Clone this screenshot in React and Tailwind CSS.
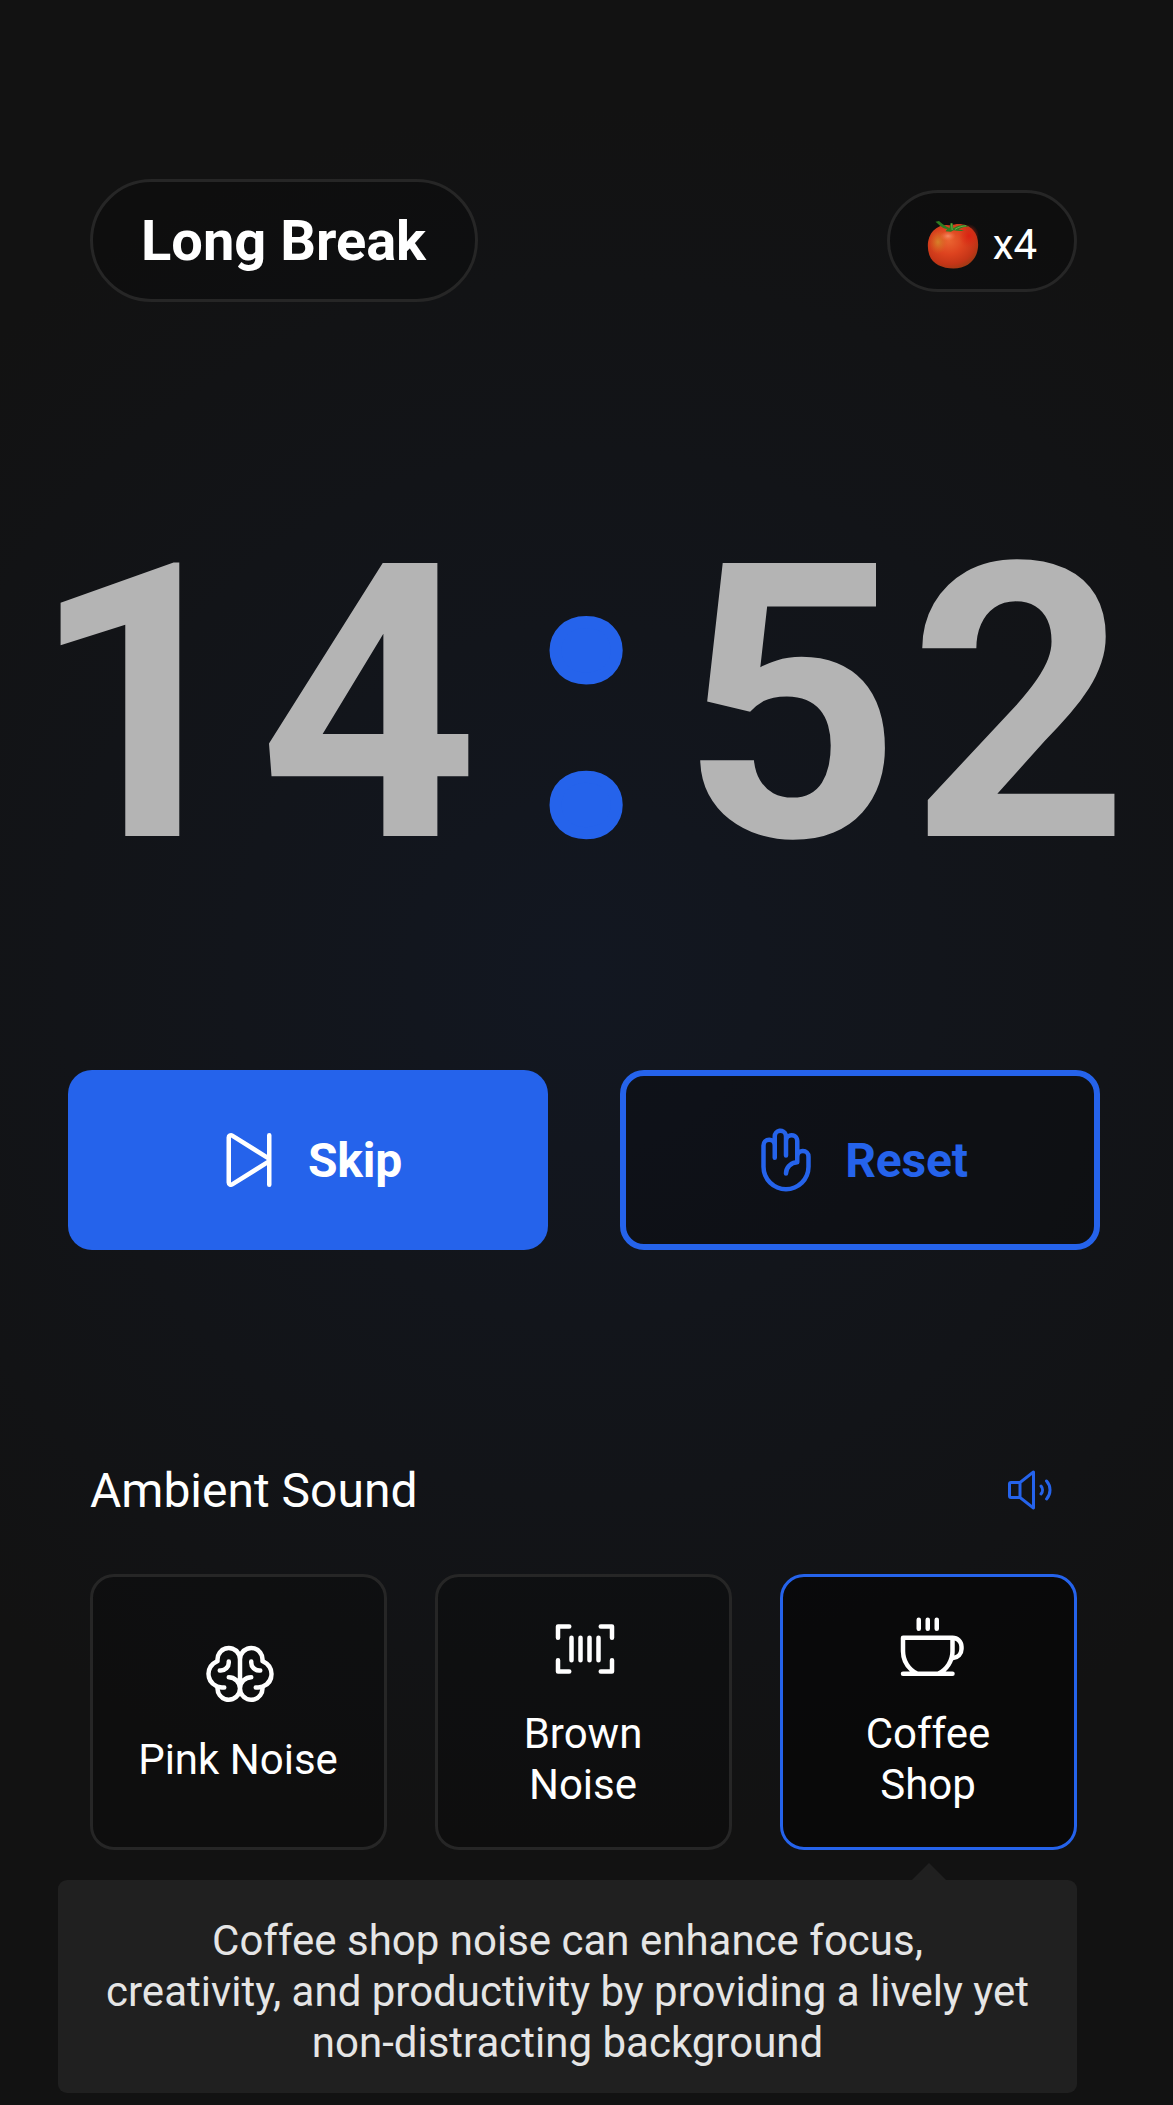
import {
  PiSkipForward,
  PiHandPalm,
  PiSpeakerHigh,
  PiBrain,
  PiBarcode,
  PiCoffee,
} from "react-icons/pi";

function Tomato() {
  return (
    <svg viewBox="0 0 54 54" className="mt-[6px] h-[54px] w-[54px]" aria-hidden="true">
      <defs>
        <radialGradient id="skin" cx="0.42" cy="0.38" r="0.66">
          <stop offset="0" stopColor="#ea6430" />
          <stop offset="0.45" stopColor="#dd431f" />
          <stop offset="0.8" stopColor="#c43517" />
          <stop offset="1" stopColor="#9c3a14" />
        </radialGradient>
        <radialGradient id="amber" cx="0.5" cy="0.5" r="0.5">
          <stop offset="0" stopColor="#d48a2a" stopOpacity="0.85" />
          <stop offset="1" stopColor="#d0701f" stopOpacity="0" />
        </radialGradient>
        <radialGradient id="shine" cx="0.5" cy="0.5" r="0.5">
          <stop offset="0" stopColor="#ffb08e" stopOpacity="0.6" />
          <stop offset="1" stopColor="#ff7b50" stopOpacity="0" />
        </radialGradient>
        <radialGradient id="red" cx="0.5" cy="0.5" r="0.5">
          <stop offset="0" stopColor="#dc1f12" stopOpacity="0.9" />
          <stop offset="1" stopColor="#dc2a14" stopOpacity="0" />
        </radialGradient>
      </defs>
      <path
        d="M24 4.500C31 1.500 41 3 46 9c5.500 5.500 6.500 16 3.500 24-3.500 9-12 14.500-23 14.500S5.500 43 2.300 34C-.7 25 1 15 6.500 9.500 12 4.500 18 3 24 4.500Z"
        fill="url(#skin)"
      />
      <ellipse cx="11" cy="21" rx="9" ry="12" fill="url(#amber)" />
      <ellipse cx="42" cy="15" rx="10" ry="12" fill="url(#red)" />
      <ellipse cx="21" cy="15" rx="8" ry="5" fill="url(#shine)" />
      <path
        d="M8.500.8 12 0C15 2.500 18 5.300 22.500 7L23.500 2l2.300.3.500 4.900c4-2.200 8.500-3.500 12.500-3l3.500 1.200c-4.500 0-8 1.100-10.700 3.100l5.500 1c-4 .9-7.500.5-10.300-.3l-3 1.600-5.200-.5 1.600-2.200C15.500 7.500 12.500 4.500 8.500.8Z"
        fill="#2f7d22"
      />
      <path d="M24.500 2.500l.7 6.500M39 4.800c-4 .2-8 1.500-11 3.600" stroke="#6db04a" strokeWidth="0.9" fill="none" />
    </svg>
  );
}

function SoundCard({ Icon, label, active }) {
  return (
    <button
      className={
        "flex h-[276px] flex-col items-center justify-center rounded-3xl border-[3px] px-9 text-center text-[42px] leading-[51px] text-white " +
        (active ? "border-[#2563eb] bg-black/50" : "border-[#262626] bg-black/20")
      }
    >
      <Icon className="ml-[3px] size-[72px] shrink-0" />
      <span className="mt-[23px] mr-px mb-px">{label}</span>
    </button>
  );
}

export default function App() {
  return (
    <main className="flex h-[2105px] w-[1173px] flex-col overflow-hidden bg-[#121212] bg-[radial-gradient(circle_870px_at_586px_975px,#121721_0%,#121212_100%)] font-['Roboto',sans-serif] text-white">
      <header className="mt-[179px] flex h-[123px] shrink-0 items-center justify-between pr-24 pl-[90px]">
        <h1 className="flex h-[123px] w-[388px] items-center justify-center rounded-full border-[3px] border-[#262626] bg-black/20 pr-px text-[56px] font-bold">
          Long Break
        </h1>
        <div className="flex h-[102px] w-[190px] items-center justify-center gap-3 rounded-full border-[3px] border-[#262626] bg-black/20 pt-2 text-[42px]">
          <Tomato />
          <span>x4</span>
        </div>
      </header>

      <section className="mt-[178px] flex h-[450px] shrink-0 items-center pl-[29px] text-[384px] leading-none font-bold text-[#b4b4b4]">
        <span className="-mr-[9px] tracking-[9px]">14</span>
        <span className="w-[202px] pb-[10px] pl-[14px] text-center text-[#2563eb] [-webkit-text-stroke:12px_#2563eb]">
          :
        </span>
        <span className="-mr-2 tracking-[8px]">52</span>
      </section>

      <div className="mt-[140px] grid h-[180px] shrink-0 grid-cols-2 gap-[72px] pr-[73px] pl-[68px] text-[48px] font-bold tracking-[-0.2px]">
        <button className="flex items-center justify-center gap-[23px] rounded-3xl bg-[#2563eb] pr-px">
          <PiSkipForward className="size-[72px]" />
          <span className="pt-0.5">Skip</span>
        </button>
        <button className="flex items-center justify-center gap-[23px] rounded-3xl border-[6px] border-[#2563eb] bg-black/20 pr-0.5 text-[#2563eb]">
          <PiHandPalm className="size-[72px]" />
          <span className="pt-0.5">Reset</span>
        </button>
      </div>

      <section className="mt-[192px] shrink-0 pr-24 pl-[90px]">
        <div className="flex h-24 items-center justify-between">
          <h2 className="pt-0.5 text-[48px]">Ambient Sound</h2>
          <button className="p-6 text-[#2563eb]">
            <PiSpeakerHigh className="size-12" />
          </button>
        </div>
        <div className="mt-9 grid grid-cols-3 gap-12">
          <SoundCard Icon={PiBrain} label="Pink Noise" />
          <SoundCard Icon={PiBarcode} label="Brown Noise" />
          <SoundCard Icon={PiCoffee} label="Coffee Shop" active />
        </div>
      </section>

      <div className="relative mt-[30px] ml-[58px] flex h-[213px] w-[1019px] shrink-0 items-center justify-center rounded-[9px] bg-[#202020] px-9 pt-[10px] text-center text-[42px] leading-[51px] text-[#e5e5e5]">
        <span className="absolute -top-[17px] left-[854px] h-[17px] w-[34px] bg-[#202020] [clip-path:polygon(50%_0,100%_100%,0_100%)]" />
        <p>
          Coffee shop noise can enhance focus,
          <br />
          creativity, and productivity by providing a lively yet
          <br />
          non-distracting background
        </p>
      </div>
    </main>
  );
}
